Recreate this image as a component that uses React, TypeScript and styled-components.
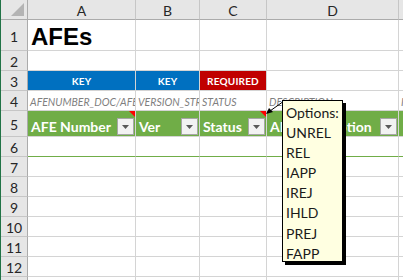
import React from "react";
import styled, { createGlobalStyle } from "styled-components";

const GlobalStyle = createGlobalStyle`
  html, body {
    margin: 0;
    padding: 0;
    background: #ffffff;
    overflow: hidden;
  }
  body {
    font-family: "Lato", "Open Sans", sans-serif;
  }
`;

const columns = ["A", "B", "C", "D", ""];
const options = ["UNREL", "REL", "IAPP", "IREJ", "IHLD", "PREJ", "FAPP"];

type Fill = "none" | "blue" | "red" | "green";

const fills: Record<Fill, string> = {
  none: "#ffffff",
  blue: "#0070c0",
  red: "#c00000",
  green: "#70ad47",
};

export default function App() {
  return (
    <>
      <GlobalStyle />
      <Sheet>
        <Grid>
          <Corner>
            <CornerMark />
          </Corner>
          {columns.map((c, i) => (
            <ColHead key={i}>{c}</ColHead>
          ))}

          <RowHead>1</RowHead>
          <Cell>
            <Title>AFEs</Title>
          </Cell>
          <Cell />
          <Cell />
          <Cell />
          <Cell />

          <RowHead>2</RowHead>
          <Cell />
          <Cell />
          <Cell />
          <Cell />
          <Cell />

          <RowHead>3</RowHead>
          <Cell fill="blue">
            <Tag>KEY</Tag>
          </Cell>
          <Cell fill="blue">
            <Tag>KEY</Tag>
          </Cell>
          <Cell fill="red">
            <Tag>REQUIRED</Tag>
          </Cell>
          <Cell />
          <Cell />

          <RowHead>4</RowHead>
          <Cell>
            <FieldName>AFENUMBER_DOC/AFENUMBER</FieldName>
          </Cell>
          <Cell>
            <FieldName>VERSION_STRING</FieldName>
          </Cell>
          <Cell>
            <FieldName>STATUS</FieldName>
          </Cell>
          <Cell>
            <FieldName>DESCRIPTION</FieldName>
          </Cell>
          <Cell>
            <FieldName>I</FieldName>
          </Cell>

          <RowHead>5</RowHead>
          <HeaderCell label="AFE Number" note />
          <HeaderCell label="Ver" />
          <HeaderCell label="Status" note />
          <HeaderCell label="AFE Description" />
          <Cell fill="green" />

          <RowHead>6</RowHead>
          {[0, 1, 2, 3, 4].map((i) => (
            <Cell key={i} tableEnd />
          ))}

          {[7, 8, 9, 10, 11, 12, 13].map((r) => (
            <React.Fragment key={r}>
              <RowHead>{r}</RowHead>
              <Cell />
              <Cell />
              <Cell />
              <Cell />
              <Cell />
            </React.Fragment>
          ))}
        </Grid>

        <Pointer width="24" height="20" viewBox="0 0 24 20">
          <line x1="21" y1="3" x2="7" y2="13" stroke="#000" strokeWidth="1" />
          <polygon points="3,16 6,10 10,14" fill="#000" />
        </Pointer>

        <Comment>
          <CommentLine>Options:</CommentLine>
          {options.map((o) => (
            <CommentLine key={o}>{o}</CommentLine>
          ))}
        </Comment>
      </Sheet>
    </>
  );
}

const HeaderCell = ({ label, note }: { label: string; note?: boolean }) => (
  <Cell fill="green">
    <HeaderText>{label}</HeaderText>
    <FilterButton>
      <svg width="7" height="4" viewBox="0 0 7 4">
        <polygon points="0,0 7,0 3.5,4" fill="#595959" />
      </svg>
    </FilterButton>
    {note && <NoteMark />}
  </Cell>
);

const Sheet = styled.div`
  position: relative;
  width: 403px;
  height: 280px;
  overflow: hidden;
  border-left: 1px solid #217346;
  box-sizing: border-box;
`;

const Grid = styled.div`
  display: grid;
  grid-template-columns: 27px 108px 64px 67px 132px 40px;
  grid-template-rows: 20px 31px 20px 20px 20px 26px repeat(8, 20px);
`;

const Corner = styled.div`
  position: relative;
  background: #e6e6e6;
  border-right: 1px solid #ababab;
  border-bottom: 1px solid #ababab;
`;

const CornerMark = styled.div`
  position: absolute;
  right: 3px;
  bottom: 3px;
  width: 0;
  height: 0;
  border-left: 13px solid transparent;
  border-bottom: 13px solid #b4b4b4;
`;

const ColHead = styled.div`
  display: flex;
  align-items: center;
  justify-content: center;
  background: #e6e6e6;
  border-right: 1px solid #c6c6c6;
  border-bottom: 1px solid #ababab;
  color: #262626;
  font-size: 14px;
  padding-top: 1px;
`;

const RowHead = styled.div`
  display: flex;
  align-items: center;
  justify-content: center;
  background: #e6e6e6;
  border-right: 1px solid #ababab;
  border-bottom: 1px solid #c6c6c6;
  color: #262626;
  font-size: 14px;
  padding-top: 2px;
`;

const Cell = styled.div<{ fill?: Fill; tableEnd?: boolean }>`
  position: relative;
  display: flex;
  align-items: center;
  min-width: 0;
  overflow: hidden;
  white-space: nowrap;
  background: ${(p) => fills[p.fill || "none"]};
  border-right: 1px solid #d4d4d4;
  border-bottom: 1px solid ${(p) => (p.tableEnd ? "#70ad47" : "#d4d4d4")};
`;

const Title = styled.span`
  font-family: "Liberation Sans", Arial, sans-serif;
  font-weight: 700;
  font-size: 24px;
  color: #000;
  padding: 4px 0 0 3px;
`;

const Tag = styled.span`
  flex: 1;
  text-align: center;
  color: #ffffff;
  font-weight: 700;
  font-size: 10px;
  letter-spacing: 0.2px;
`;

const FieldName = styled.span`
  font-style: italic;
  font-size: 10.5px;
  color: #7f7f7f;
  padding: 2px 0 0 2px;
`;

const HeaderText = styled.span`
  flex: 1;
  min-width: 0;
  overflow: hidden;
  color: #ffffff;
  font-weight: 700;
  font-size: 14px;
  padding: 5px 0 0 3px;
`;

const FilterButton = styled.div`
  flex: none;
  align-self: flex-end;
  display: flex;
  align-items: center;
  justify-content: center;
  width: 15px;
  height: 15px;
  margin: 0 1px 1px 2px;
  background: #f2f2f2;
  border: 1px solid #a6a6a6;
`;

const NoteMark = styled.div`
  position: absolute;
  top: 0;
  right: 0;
  width: 0;
  height: 0;
  border-left: 6px solid transparent;
  border-top: 6px solid #ff0000;
`;

const Pointer = styled.svg`
  position: absolute;
  left: 262px;
  top: 98px;
`;

const Comment = styled.div`
  position: absolute;
  left: 281px;
  top: 100px;
  width: 61px;
  height: 162px;
  padding: 2px 0 0 3px;
  box-sizing: border-box;
  background: #ffffe1;
  border: 1px solid #000;
  box-shadow: 3px 3px 0 #000;
  font-family: "Lato", "Open Sans", sans-serif;
`;

const CommentLine = styled.div`
  font-size: 14px;
  line-height: 20.1px;
  color: #1a1a1a;
`;
